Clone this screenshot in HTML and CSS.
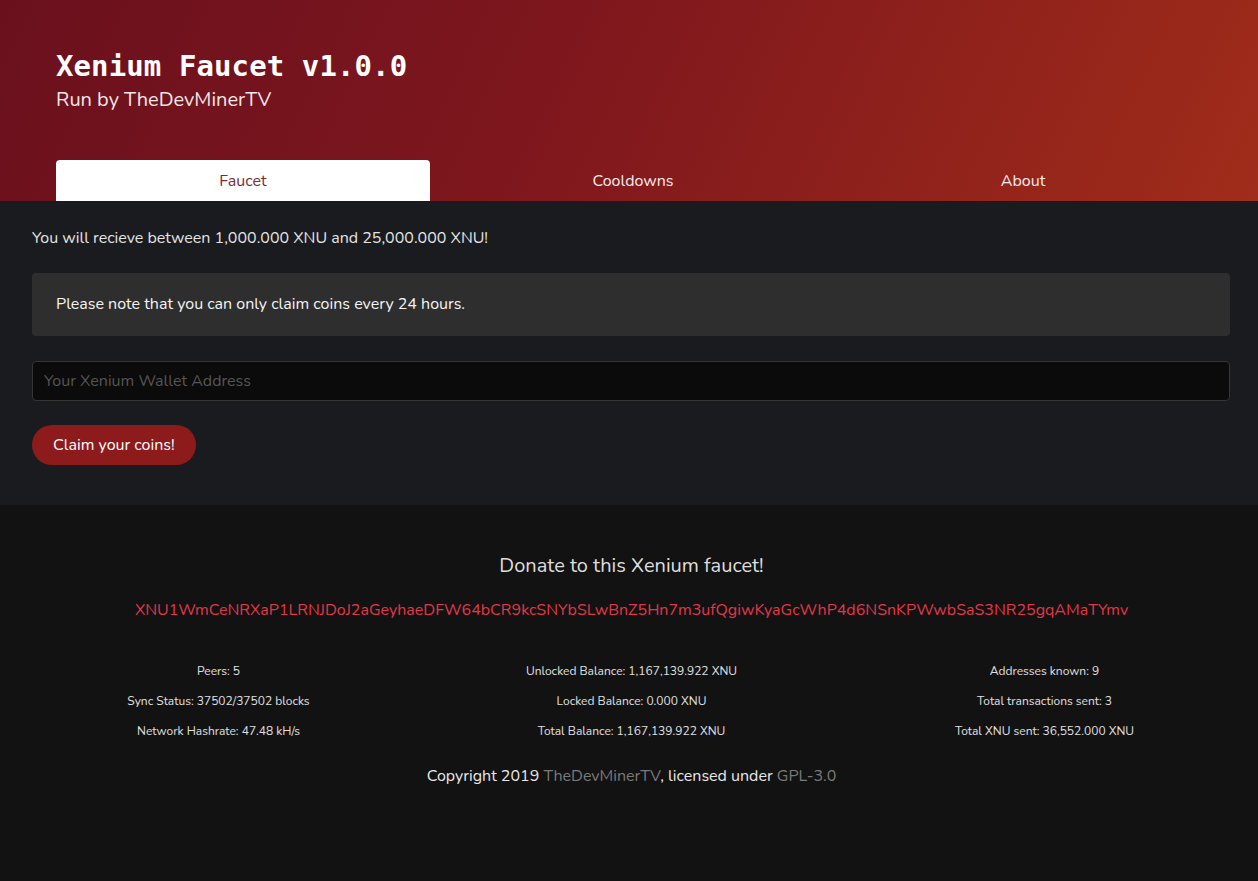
FILE: index.html
```html
<!DOCTYPE html>
<html lang="en">
<head>
<meta charset="utf-8">
<title>Xenium Faucet v1.0.0</title>
<link rel="stylesheet" href="styles.css">
</head>
<body>
<header class="hero">
  <div class="hero-inner">
    <h1 class="title">Xenium Faucet v1.0.0</h1>
    <p class="subtitle">Run by TheDevMinerTV</p>
    <nav class="tabs">
      <a class="tab active">Faucet</a>
      <a class="tab">Cooldowns</a>
      <a class="tab">About</a>
    </nav>
  </div>
</header>
<main class="main">
  <p class="lead">You will recieve between 1,000.000 XNU and 25,000.000 XNU!</p>
  <div class="note">Please note that you can only claim coins every 24 hours.</div>
  <input class="wallet" type="text" placeholder="Your Xenium Wallet Address">
  <button class="claim">Claim your coins!</button>
</main>
<footer class="footer">
  <h2 class="donate">Donate to this Xenium faucet!</h2>
  <p class="address">XNU1WmCeNRXaP1LRNJDoJ2aGeyhaeDFW64bCR9kcSNYbSLwBnZ5Hn7m3ufQgiwKyaGcWhP4d6NSnKPWwbSaS3NR25gqAMaTYmv</p>
  <div class="stats">
    <div class="stat-col">
      <div class="stat">Peers: 5</div>
      <div class="stat">Sync Status: 37502/37502 blocks</div>
      <div class="stat">Network Hashrate: 47.48 kH/s</div>
    </div>
    <div class="stat-col">
      <div class="stat">Unlocked Balance: 1,167,139.922 XNU</div>
      <div class="stat">Locked Balance: 0.000 XNU</div>
      <div class="stat">Total Balance: 1,167,139.922 XNU</div>
    </div>
    <div class="stat-col">
      <div class="stat">Addresses known: 9</div>
      <div class="stat">Total transactions sent: 3</div>
      <div class="stat">Total XNU sent: 36,552.000 XNU</div>
    </div>
  </div>
  <p class="copyright">Copyright 2019 <a class="muted-link">TheDevMinerTV</a>, licensed under <a class="muted-link">GPL-3.0</a></p>
</footer>
</body>
</html>
```

FILE: styles.css
```css
* { box-sizing: border-box; }
html, body { margin: 0; padding: 0; }
body {
  font-family: "Nunito", "Lato", "Open Sans", sans-serif;
  background: #121212;
  color: #e6e6e6;
  min-height: 881px;
  display: flex;
  flex-direction: column;
}
.hero {
  background: linear-gradient(115deg, #6a101d 0%, #7f171d 45%, #a02c1a 100%);
  height: 201px;
}
.hero-inner {
  padding: 46px 48px 0 56px;
  display: flex;
  flex-direction: column;
}
.title {
  margin: 0;
  font-family: "DejaVu Sans Mono", "Liberation Mono", monospace;
  font-weight: bold;
  font-size: 29px;
  line-height: 40px;
  color: #ffffff;
  letter-spacing: 0.1px;
}
.subtitle {
  margin: 0;
  font-size: 20px;
  line-height: 28px;
  color: #f3e6e8;
}
.tabs {
  margin-top: 46px;
  display: flex;
  gap: 16px;
}
.tab {
  flex: 1;
  height: 41px;
  display: flex;
  align-items: center;
  justify-content: center;
  font-size: 16px;
  color: #f7ecec;
  border-radius: 4px 4px 0 0;
}
.tab.active {
  background: #ffffff;
  color: #7b2a2d;
}
.main {
  background: #1a1b1e;
  padding: 25px 28px 40px 32px;
  display: flex;
  flex-direction: column;
  align-items: flex-start;
}
.lead {
  margin: 0;
  font-size: 16px;
  line-height: 24px;
  color: #e4e4e4;
}
.note {
  margin-top: 23px;
  width: 100%;
  background: #2e2e2e;
  border-radius: 4px;
  padding: 20px 24px;
  font-size: 16px;
  line-height: 23px;
  color: #f4f4f4;
}
.wallet {
  margin-top: 25px;
  width: 100%;
  height: 40px;
  background: #0b0b0b;
  border: 1px solid #353535;
  border-radius: 4px;
  padding: 0 11px;
  font-family: inherit;
  font-size: 16px;
  color: #ddd;
}
.wallet::placeholder { color: #555555; }
.claim {
  margin-top: 24px;
  height: 40px;
  padding: 0 21px;
  border: none;
  border-radius: 20px;
  background: #8e1b1c;
  color: #ffffff;
  font-family: inherit;
  font-size: 16px;
}
.footer {
  flex: 1;
  background: #121212;
  padding: 49px 7px 40px 12px;
  display: flex;
  flex-direction: column;
  align-items: center;
}
.donate {
  margin: 0;
  font-weight: normal;
  font-size: 20px;
  line-height: 24px;
  color: #dedede;
}
.address {
  margin: 20px 0 0;
  font-size: 16px;
  line-height: 24px;
  color: #e0384a;
}
.stats {
  margin-top: 34px;
  width: 100%;
  display: grid;
  grid-template-columns: 1fr 1fr 1fr;
}
.stat-col {
  display: flex;
  flex-direction: column;
  align-items: center;
}
.stat {
  font-family: "Nunito", "DejaVu Sans", sans-serif;
  font-size: 12px;
  line-height: 30px;
  color: #e0e0e0;
}
.copyright {
  margin: 18px 0 0;
  font-size: 16px;
  line-height: 24px;
  color: #e8e8e8;
}
.muted-link { color: #7a7a7a; }
```
